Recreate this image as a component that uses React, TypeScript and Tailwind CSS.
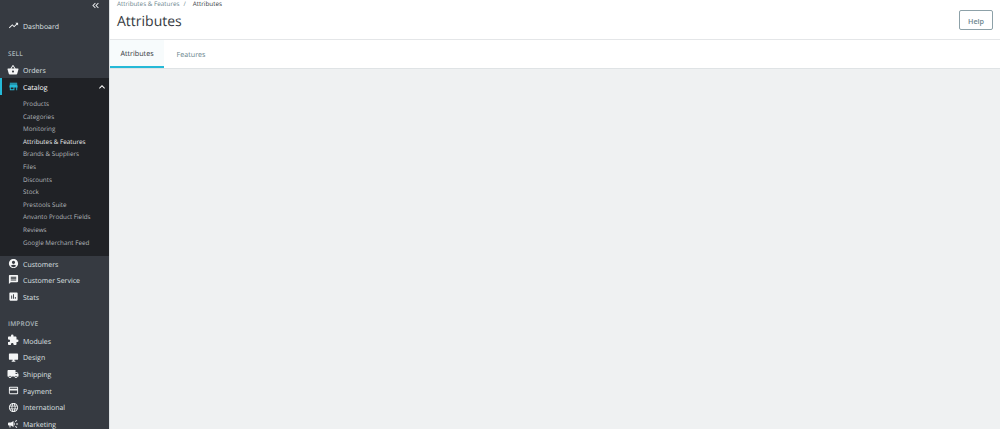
import type { ReactNode } from 'react';
import {
  MdAccountCircle,
  MdAssessment,
  MdCampaign,
  MdCreditCard,
  MdDesktopWindows,
  MdExpandLess,
  MdExtension,
  MdKeyboardDoubleArrowLeft,
  MdLanguage,
  MdLocalShipping,
  MdMessage,
  MdShoppingBasket,
  MdStore,
  MdTrendingUp,
} from 'react-icons/md';

const catalogLinks = [
  'Products',
  'Categories',
  'Monitoring',
  'Attributes & Features',
  'Brands & Suppliers',
  'Files',
  'Discounts',
  'Stock',
  'Prestools Suite',
  'Anvanto Product Fields',
  'Reviews',
  'Google Merchant Feed',
];

function NavItem({ icon, label }: { icon: ReactNode; label: string }) {
  return (
    <div className="flex h-[16.7px] items-center pl-[4px] text-[7px] text-[#dfe1e3]">
      <span className="flex w-[19px] justify-center pr-[1px] text-[#f4f5f6]">{icon}</span>
      <span className="pt-[5px]">{label}</span>
    </div>
  );
}

function SectionTitle({ label }: { label: string }) {
  return <div className="h-[10px] pl-2 text-[6.5px] leading-[10px] font-semibold tracking-[0.2px] text-[#a7b3b8]">{label}</div>;
}

export default function App() {
  return (
    <div className="flex h-[429px] w-[1000px] overflow-hidden bg-[#eff1f2] font-['Open_Sans',sans-serif] [text-rendering:geometricPrecision]">
      <aside className="flex h-full w-[109px] shrink-0 flex-col bg-[#363a41]">
        <div className="flex h-[13px] justify-end pr-[8px] text-[#e8eaec]">
          <MdKeyboardDoubleArrowLeft size={11} />
        </div>
        <div className="mt-[6px]">
          <NavItem icon={<MdTrendingUp size={11} />} label="Dashboard" />
        </div>
        <div className="mt-[15px]">
          <SectionTitle label="SELL" />
        </div>
        <div className="mt-[3px]">
          <NavItem icon={<MdShoppingBasket size={12} />} label="Orders" />
        </div>
        <div className="bg-[#202226] pb-[7px]">
          <div className="relative flex h-[16.7px] items-center pl-[4px] text-[7px] text-white">
            <span className="absolute top-0 left-0 h-full w-[2px] bg-[#25b9d7]" />
            <span className="flex w-[19px] justify-center pr-[1px] text-[#25b9d7]">
              <MdStore size={11} />
            </span>
            <span className="pt-[5px]">Catalog</span>
            <span className="ml-auto pr-[1px] text-white">
              <MdExpandLess size={12} />
            </span>
          </div>
          <div className="pt-[3px]">
            {catalogLinks.map(link => (
              <div
                key={link}
                className={`h-[12.6px] pl-[23px] text-[6.3px] leading-[12.6px] ${link === 'Attributes & Features' ? 'text-[#eceeef]' : 'text-[#b3b7bb]'}`}
              >
                {link}
              </div>
            ))}
          </div>
        </div>
        <div className="-mt-[1px]">
          <NavItem icon={<MdAccountCircle size={11} />} label="Customers" />
        </div>
        <NavItem icon={<MdMessage size={11} />} label="Customer Service" />
        <div className="mt-[1px]">
          <NavItem icon={<MdAssessment size={11} />} label="Stats" />
        </div>
        <div className="mt-[14px]">
          <SectionTitle label="IMPROVE" />
        </div>
        <div className="mt-[3px]">
          <NavItem icon={<MdExtension size={12} />} label="Modules" />
          <NavItem icon={<MdDesktopWindows size={11} />} label="Design" />
          <NavItem icon={<MdLocalShipping size={12} />} label="Shipping" />
          <NavItem icon={<MdCreditCard size={11} />} label="Payment" />
          <NavItem icon={<MdLanguage size={11} />} label="International" />
          <NavItem icon={<MdCampaign size={12} />} label="Marketing" />
        </div>
      </aside>

      <main className="flex min-w-0 flex-1 flex-col border-l border-[#dfe3e5]">
        <header className="flex h-[40px] justify-between border-b border-[#e4e6e8] bg-white px-[7px]">
          <div>
            <div className="flex h-[7px] items-center gap-[4px] text-[6.3px] leading-[7px] text-[#6c868e]">
              <span>Attributes &amp; Features</span>
              <span>/</span>
              <span className="ml-[3px] text-[#363a41]">Attributes</span>
            </div>
            <h1 className="mt-[4px] text-[14px] leading-[22px] text-[#363a41]">Attributes</h1>
          </div>
          <button className="mt-[10px] h-[20px] w-[34px] rounded-[2px] border border-[#8da1a8] bg-white pt-[2px] text-[7.2px] font-semibold text-[#6c868e]">
            Help
          </button>
        </header>
        <nav className="flex h-[29px] border-b border-[#dfe3e5] bg-white text-[7.2px]">
          <div className="flex w-[54px] items-center justify-center border-b-2 border-[#25b9d7] bg-[#f7fbfc] pt-[3px] text-[#363a41]">
            Attributes
          </div>
          <div className="flex w-[54px] items-center justify-center pt-[3px] text-[#6c868e]">Features</div>
        </nav>
      </main>
    </div>
  );
}
